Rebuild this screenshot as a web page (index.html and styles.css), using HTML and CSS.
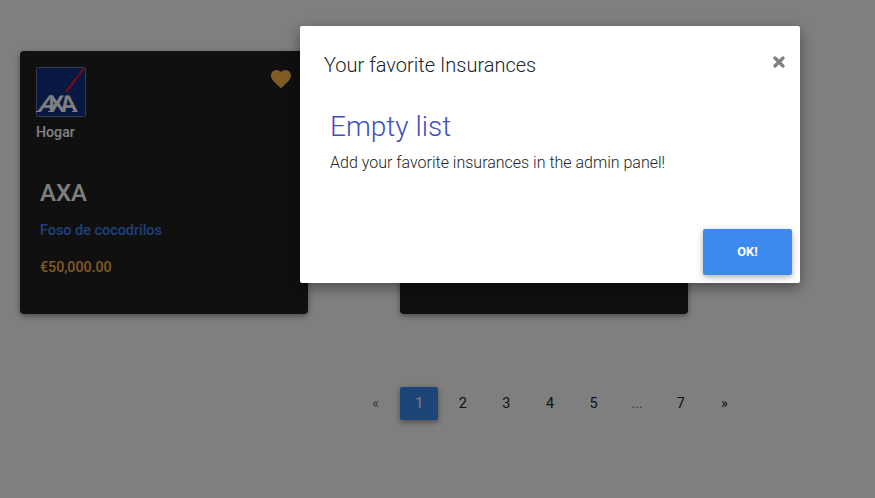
FILE: index.html
```html
<!DOCTYPE html>
<html lang="en">
<head>
<meta charset="utf-8">
<title>Insurances</title>
<link rel="stylesheet" href="styles.css">
</head>
<body>
<main class="page">
  <section class="cards">
    <article class="card">
      <header class="card-head">
        <div>
          <svg class="logo" width="50" height="50" viewBox="0 0 50 50">
            <rect x=".5" y=".5" width="49" height="49" rx="1" fill="#103184" stroke="#657aa8"/>
            <path d="M28.5 25L47 1h2.5L31.5 25z" fill="#e3182b"/>
            <path d="M0 44.5h4M12 44.5h5M36 44.5h5" stroke="#fff" stroke-width="1"/>
            <g class="logo-text">
              <text transform="translate(.5 44.5) skewX(-20)">A</text>
              <text transform="translate(13.5 44.5) skewX(4)">X</text>
              <text transform="translate(25 44.5) skewX(8)">A</text>
            </g>
          </svg>
          <div class="category">Hogar</div>
        </div>
        <svg class="heart" width="24" height="24" viewBox="0 0 24 24"><path fill="currentColor" d="M12 21.35l-1.45-1.32C5.4 15.36 2 12.28 2 8.5 2 5.42 4.42 3 7.5 3c1.74 0 3.41.81 4.5 2.09C13.09 3.81 14.76 3 16.5 3 19.58 3 22 5.42 22 8.5c0 3.78-3.4 6.86-8.55 11.54z"/></svg>
      </header>
      <div class="card-body">
        <h2>AXA</h2>
        <p class="product">Foso de cocodrilos</p>
        <p class="price">€50,000.00</p>
      </div>
    </article>
    <article class="card"></article>
  </section>
  <nav class="pagination">
    <span class="muted">«</span><span class="active">1</span><span>2</span><span>3</span><span>4</span><span>5</span><span class="muted">...</span><span>7</span><span>»</span>
  </nav>
</main>
<div class="backdrop">
  <div class="modal" role="dialog">
    <header class="modal-head">
      <h1>Your favorite Insurances</h1>
      <svg class="close" width="12" height="12" viewBox="0 0 12 12"><path d="M2 2l8 8M10 2l-8 8"/></svg>
    </header>
    <div class="modal-body">
      <h3>Empty list</h3>
      <p>Add your favorite insurances in the admin panel!</p>
    </div>
    <footer class="modal-foot"><button>OK!</button></footer>
  </div>
</div>
</body>
</html>
```
FILE: styles.css
```css
* { box-sizing: border-box; }
body {
  margin: 0;
  height: 498px;
  overflow: hidden;
  background: #fff;
  color: #212529;
  font-family: Roboto, sans-serif;
  font-weight: 300;
}
h1, h2, h3, p { margin: 0; }
.page { padding-top: 51px; }
.cards { display: flex; gap: 92px; padding-left: 20px; }
.card {
  width: 288px;
  height: 263px;
  border-radius: 4px;
  background: #212121;
  color: #fff;
  box-shadow: 0 2px 5px rgba(0,0,0,.3), 0 2px 10px rgba(0,0,0,.15);
}
.card-head {
  display: flex;
  justify-content: space-between;
  height: 98px;
  padding: 16px 15px 0 16px;
}
.logo { display: block; }
.logo-text {
  fill: #fff;
  font: bold 24px "Liberation Sans", sans-serif;
}
.category { margin-top: 5px; font-size: 14.2px; line-height: 20px; font-weight: 500; }
.heart { color: #ffb74d; }
.card-body { padding: 28px 20px 0; font-weight: 500; }
.card-body h2 { font-size: 24px; line-height: 32px; font-weight: 500; }
.product { margin-top: 11px; font-size: 14.4px; line-height: 21px; color: #4080f0; }
.price { margin-top: 16px; font-size: 14.2px; line-height: 20px; color: #ffb04a; }
.pagination {
  display: flex;
  gap: 5.6px;
  margin: 73px 0 0 356.6px;
  font-size: 14.4px;
  font-weight: 400;
}
.pagination span {
  width: 38px;
  height: 33px;
  line-height: 34px;
  text-align: center;
  border-radius: 2px;
}
.pagination .muted { color: #777; }
.pagination .active {
  background: #3d8aee;
  color: #fff;
  box-shadow: 0 2px 5px rgba(0,0,0,.3), 0 2px 10px rgba(0,0,0,.15);
}
.backdrop {
  position: absolute;
  inset: 0;
  padding: 26px 0 0 300px;
  background: rgba(0,0,0,.5);
}
.modal {
  display: flex;
  flex-direction: column;
  width: 500px;
  height: 257px;
  padding: 24px 8px 8px 24px;
  border-radius: 2px;
  background: #fff;
  box-shadow: 0 5px 11px rgba(0,0,0,.18), 0 4px 15px rgba(0,0,0,.25);
}
.modal-head { display: flex; justify-content: space-between; align-items: center; height: 30px; padding-right: 7.5px; }
.modal-head h1 { font-size: 20px; line-height: 30px; font-weight: 300; }
.close { margin-top: -6px; fill: none; stroke: #808080; stroke-width: 3.2; stroke-linecap: round; }
.modal-body { padding: 28px 0 0 6px; }
.modal-body h3 { font-size: 28px; line-height: 38px; font-weight: 300; color: #3f51b5; }
.modal-body p { margin-top: 5px; font-size: 16px; line-height: 24px; }
.modal-foot { display: flex; justify-content: flex-end; margin-top: auto; }
.modal-foot button {
  width: 89px;
  height: 46px;
  padding: 0 0 2px;
  border: 0;
  border-radius: 2px;
  background: #3d8aee;
  color: #fff;
  font: 700 12.8px Roboto, sans-serif;
  box-shadow: 0 2px 5px rgba(0,0,0,.2), 0 2px 10px rgba(0,0,0,.14);
}
```
